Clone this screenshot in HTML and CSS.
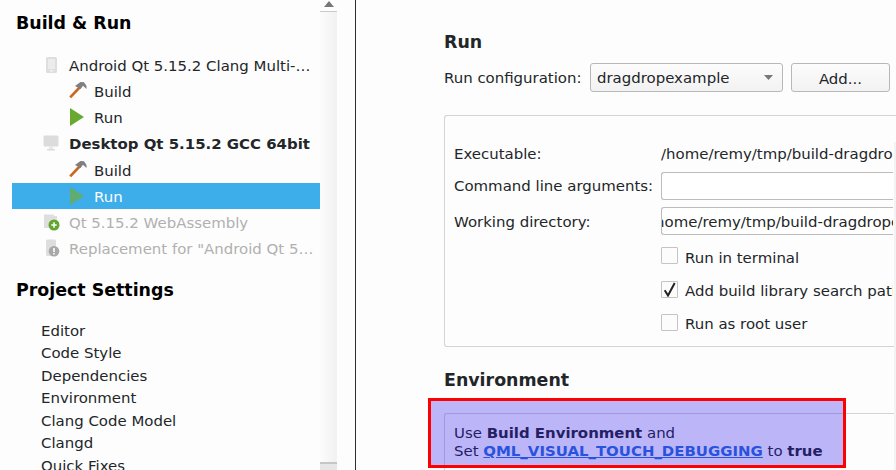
FILE: index.html
```html
<!DOCTYPE html>
<html lang="en">
<head>
<meta charset="utf-8">
<title>Build &amp; Run</title>
<link rel="stylesheet" href="styles.css">
</head>
<body>
<div class="app">
  <aside class="side">
    <div class="side-scroll">
      <h2 class="side-h first">Build &amp; Run</h2>
      <ul class="tree">
        <li class="kit"><svg class="ico" viewBox="0 0 18 18"><rect x="4" y="1" width="11" height="16" rx="1.500" fill="#dedede"/><rect x="6" y="3" width="7" height="10" fill="#ececec"/><rect x="8" y="14" width="3" height="1.500" fill="#f4f4f4"/></svg><span class="lbl">Android Qt 5.15.2 Clang Multi-…</span></li>
        <li class="sub"><svg class="ico" viewBox="0 0 18 18"><use href="#ham"/></svg><span class="lbl">Build</span></li>
        <li class="sub"><svg class="ico" viewBox="0 0 18 18"><path d="M1 0V18L15 9Z" fill="#6aa92f"/></svg><span class="lbl">Run</span></li>
        <li class="kit bold"><svg class="ico" viewBox="0 0 18 18"><rect x="1.500" y="0.500" width="15" height="11" rx="1.500" fill="#dcdcdc"/><rect x="7" y="11.500" width="4" height="3" fill="#e8e8e8"/><rect x="5" y="14" width="8" height="1.500" fill="#dcdcdc"/></svg><span class="lbl">Desktop Qt 5.15.2 GCC 64bit</span></li>
        <li class="sub"><svg class="ico" viewBox="0 0 18 18"><use href="#ham"/></svg><span class="lbl">Build</span></li>
        <li class="sub sel"><svg class="ico" viewBox="0 0 18 18"><path d="M1 0V18L15 9Z" fill="#60ac72"/></svg><span class="lbl">Run</span></li>
        <li class="kit dim"><svg class="ico" viewBox="0 0 18 18"><path d="M2 1.500H11L12.500 3H15V10H9V15H2Z" fill="#dedede"/><circle cx="12" cy="12" r="5.500" fill="#62a62e"/><path d="M9.300 12H14.700M12 9.300V14.700" stroke="#fff" stroke-width="1.500"/></svg><span class="lbl">Qt 5.15.2 WebAssembly</span></li>
        <li class="kit dim"><svg class="ico" viewBox="0 0 18 18"><rect x="4" y="0.500" width="10" height="16.500" rx="1.500" fill="#dedede"/><circle cx="12" cy="12.200" r="5.300" fill="#a8a8a8"/><path d="M12 9V13M12 14V15.500" stroke="#fff" stroke-width="1.600"/></svg><span class="lbl">Replacement for "Android Qt 5…</span></li>
      </ul>
      <h2 class="side-h">Project Settings</h2>
      <ul class="settings">
        <li>Editor</li>
        <li>Code Style</li>
        <li>Dependencies</li>
        <li>Environment</li>
        <li>Clang Code Model</li>
        <li>Clangd</li>
        <li>Quick Fixes</li>
      </ul>
    </div>
    <div class="scrollbar">
      <div class="sb-up"><svg width="10" height="6" viewBox="0 0 10 6"><path d="M0 6L5 0L10 6Z" fill="#777"/></svg></div>
      <div class="sb-fill"></div>
      <div class="sb-handle"></div>
    </div>
  </aside>
  <main class="main">
    <h3 class="sec">Run</h3>
    <div class="cfg">
      <span class="cfg-label">Run configuration:</span>
      <div class="combo"><span class="combo-text">dragdropexample</span><svg width="9" height="5" viewBox="0 0 9 5"><path d="M0 0H9L4.500 5Z" fill="#777"/></svg></div>
      <div class="btn">Add...</div>
    </div>
    <section class="panel run-panel">
      <div class="grid">
        <span class="k">Executable:</span><span class="v">/home/remy/tmp/build-dragdropexample-Desktop</span>
        <span class="k">Command line arguments:</span><div class="input"></div>
        <span class="k wd">Working directory:</span><div class="input path"><span>/home/remy/tmp/build-dragdropexample</span></div>
        <span></span><label class="chk"><i class="box"></i><span class="chk-text">Run in terminal</span></label>
        <span></span><label class="chk"><i class="box"><svg width="15" height="15" viewBox="0 0 15 15"><path d="M2.700 8.300L6 13.500L12.700 1" fill="none" stroke="#222" stroke-width="2"/></svg></i><span class="chk-text">Add build library search path to LD_LIBRARY_PATH</span></label>
        <span></span><label class="chk last"><i class="box"></i><span class="chk-text">Run as root user</span></label>
      </div>
    </section>
    <h3 class="sec env">Environment</h3>
    <section class="panel notice">
      <p>Use <b>Build Environment</b> and<br>Set <a href="#">QML_VISUAL_TOUCH_DEBUGGING</a> to <b>true</b></p>
    </section>
    <div class="highlight"></div>
    <div class="edge-strip"></div>
  </main>
</div>
<svg class="defs" width="0" height="0"><defs><g id="ham"><path d="M1.200 15.300L11.500 4.500" stroke="#c8691f" stroke-width="2.600"/><path d="M6 4L11.500 0L15 0.300L17.500 4L17.500 7L14 3.800L11.500 7Z" fill="#7f7f7f"/></g></defs></svg>
</body>
</html>
```
FILE: styles.css
```css
* { box-sizing: border-box; }
html, body { margin: 0; padding: 0; height: 100%; overflow: hidden; }
body { font-family: "DejaVu Sans", sans-serif; font-size: 14.940px; color: #232629; background: #fdfdfd; }
.app { display: flex; width: 896px; height: 470px; overflow: hidden; }
.side { width: 356px; flex: none; display: flex; border-right: 1px solid #2e2e2e; }
.side-scroll { width: 320px; flex: none; padding-left: 12px; overflow: hidden; }
.side-h { margin: 0; padding-left: 4px; font-size: 17.400px; line-height: 20px; font-weight: 700; color: #000; }
.side-h.first { margin-top: 13px; }
ul { list-style: none; margin: 0; padding: 0; }
.tree { margin-top: 19px; margin-bottom: 18.400px; }
.tree li { height: 26.200px; display: flex; align-items: center; white-space: nowrap; }
.lbl { margin-top: 2px; }
.bold .lbl { margin-top: 0; }
.dim .lbl { margin-top: 2px; }
.kit { padding-left: 30px; }
.sub { padding-left: 57px; }
.ico { width: 18px; height: 18px; flex: none; }
.kit .ico { margin-right: 9px; }
.sub .ico { margin-right: 7px; }
.bold { font-weight: 700; }
.dim { color: #b0b0b0; }
.tree .sel { background: #3daee9; color: #fcfcfc; }
.settings { padding-left: 29px; margin-top: 20px; }
.settings li { height: 22.500px; line-height: 22.500px; white-space: nowrap; }
.scrollbar { width: 17px; flex: none; background: linear-gradient(to right, #fcfcfc, #f1f1f1); display: flex; flex-direction: column; }
.sb-up { height: 12px; display: flex; justify-content: center; align-items: flex-start; padding-top: 1px; background: #fdfdfd; border-bottom: 1px solid #c9c9c9; }
.sb-fill { flex: 1; }
.sb-handle { height: 8px; background: #e6e6e6; border-top: 2px solid #c6c6c6; }
.main { flex: 1; position: relative; padding: 32px 0 0 88px; overflow: hidden; min-width: 0; }
.sec { margin: 0; font-size: 17.400px; line-height: 20px; font-weight: 700; color: #232629; }
.cfg { display: flex; align-items: center; margin-top: 11px; white-space: nowrap; }
.cfg-label { width: 146px; flex: none; }
.combo { width: 193px; height: 29px; flex: none; margin-right: 8px; display: flex; align-items: center; justify-content: space-between; padding: 0 9px 0 6px; border: 1px solid #b8b8b8; border-radius: 3px; background: linear-gradient(#fcfcfc, #f2f2f2); }
.btn { width: 99px; height: 29px; flex: none; text-align: center; line-height: 30px; border: 1px solid #b8b8b8; border-radius: 3px; background: linear-gradient(#fcfcfc, #f2f2f2); }
.panel { margin-top: 23px; width: 452px; border: 1px solid #d4d4d4; border-right: 0; border-radius: 3px 0 0 3px; overflow: hidden; }
.run-panel { height: 232px; padding: 24px 0 0 9px; }
.grid { display: grid; grid-template-columns: 207px 232px; grid-template-rows: 32px 35px 32px 33.500px 33.500px 33.500px; white-space: nowrap; }
.k { height: 28px; line-height: 28px; }
.k.wd { line-height: 30px; }
.v { height: 28px; line-height: 28px; overflow: hidden; }
.input { height: 28px; border: 1px solid #bcbcbc; border-right: 0; border-radius: 3px 0 0 3px; overflow: hidden; line-height: 28px; background: #fff; }
.path span { display: block; margin-left: -12px; }
.chk { display: flex; align-items: center; height: 33.500px; overflow: hidden; }
.chk-text { margin-top: 4px; }
.last .chk-text { margin-top: 2px; }
.box { width: 17px; height: 17px; flex: none; margin-right: 7px; border: 1px solid #c4c4c4; border-radius: 1px; background: #fcfcfc; display: flex; align-items: center; justify-content: center; }
.env { margin-top: 23px; }
.notice { height: 80px; padding: 10px 0 0 9px; }
.notice p { margin: 0; line-height: 18px; }
.notice a { color: #2a6fd6; font-weight: 700; }
.highlight { position: absolute; left: 72px; top: 398px; width: 418px; height: 70px; background: rgba(40, 20, 240, 0.3); border: 3px solid #f00; }
.edge-strip { position: absolute; right: 0; top: 142px; bottom: 0; width: 2px; background: #f3f3f3; }
.defs { position: absolute; }
```
